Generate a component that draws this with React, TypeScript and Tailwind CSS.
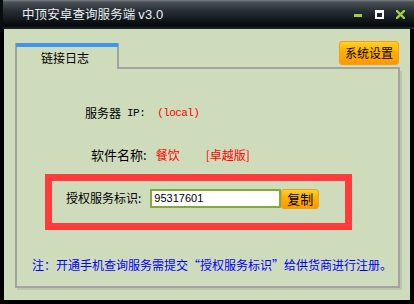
import React from "react";

const cjk = "font-['Noto_Sans_CJK_SC','Noto_Sans_CJK_JP',sans-serif]";

export default function App() {
  return (
    <div className={`w-[414px] h-[304px] bg-black flex flex-col ${cjk}`}>
      {/* title bar */}
      <div className="h-[29px] shrink-0 flex items-center bg-[linear-gradient(to_bottom,#7d8388_0px,#4a5157_2px,#2a3137_10px,#0d1216_22px,#05080a_26px,#1c2227_28px)] border-l-[3px] border-[#0a0d10]">
        <span className="ml-[19px] text-[12.5px] leading-[16px] text-[#e8eef2] tracking-[0.1px]">
          中顶安卓查询服务端 <span className="font-['Liberation_Sans',sans-serif] text-[13px]">v3.0</span>
        </span>
        <div className="ml-auto flex items-center mr-[9px]">
          <div className="w-[8px] h-[3px] bg-[#a3d13d] mt-[1px]" />
          <div className="w-[9px] h-[9px] ml-[13px] border-2 border-t-[3px] border-white" />
          <svg className="ml-[12px]" width="9" height="9" viewBox="0 0 9 9">
            <path d="M1 1 L8 8 M8 1 L1 8" stroke="#a3d13d" strokeWidth="2.4" strokeLinecap="square" />
          </svg>
        </div>
      </div>

      {/* body */}
      <div className="flex-1 ml-[4px] mr-[4px] mb-[4px] bg-[#cfdcbb] flex flex-col pl-[11px] pr-[10px] pt-[12px]">
        {/* tab row */}
        <div className="flex h-[28px]">
          <div className="w-[104px] mt-[2px] border-l-2 border-r-2 border-[#a3a3a3] flex flex-col">
            <div className="h-[4px] bg-[#3d97f0] rounded-t-[1px] -mx-[1px]" />
            <div className="text-center text-[12px] leading-[16px] text-black mt-[3px] -ml-[4px]">链接日志</div>
          </div>
          <div className="flex-1 border-b-2 border-[#a3a3a3] flex justify-end items-start">
            <div className="w-[60px] h-[24px] mr-[1px] rounded-[3px] border border-[#f0a010] bg-[linear-gradient(to_bottom,#ffcf2a,#ffb000_45%,#ff9800)] flex items-center justify-center text-[12px] leading-[16px] text-black">
              系统设置
            </div>
          </div>
        </div>

        {/* panel */}
        <div className="h-[219px] border-l-2 border-r-2 border-b-2 border-[#a3a3a3] shadow-[2px_2px_0_#bcc6ad] flex flex-col">
          <div className="mt-[36px] ml-[68px] h-[16px] flex items-center text-[12px] leading-[16px] text-black">
            <span>服务器</span>
            <span className="font-['Liberation_Mono',monospace] text-[11px] tracking-[-0.5px] ml-[6px]">IP:</span>
            <span className="font-['Liberation_Mono',monospace] text-[11px] tracking-[-0.6px] ml-[12px] text-[#ff0000]">(local)</span>
          </div>
          <div className="mt-[26px] ml-[74px] h-[16px] flex items-center text-[13px] leading-[16px] text-black">
            <span>软件名称:</span>
            <span className="ml-[9px] text-[#ff0000] text-[12px]">餐饮</span>
            <span className="ml-[26px] text-[#ff0000] text-[12px]">[卓越版]</span>
          </div>
          <div className="mt-[11px] ml-[28px] w-[307px] h-[56px] border-[7px] border-[#ff3b3b] flex items-start pt-[7px]">
            <span className="ml-[14px] h-[20px] flex items-center text-[12px] leading-[16px] text-black">授权服务标识:</span>
            <div className="ml-[9px] mt-[1px] w-[131px] h-[19px] bg-white border-2 border-[#84a83a] flex items-center pl-[2px] font-['Liberation_Sans',sans-serif] text-[11px] text-black">
              95317601
            </div>
            <div className="w-[38px] h-[20px] mt-[1px] rounded-[3px] border border-[#f0a010] bg-[linear-gradient(to_bottom,#ffcf2a,#ffb000_45%,#ff9800)] flex items-center justify-center text-[13px] leading-[16px] text-black">
              复制
            </div>
          </div>
          <div className="mt-[27px] ml-[15px] h-[16px] text-[12px] leading-[16px] text-[#0000ff] whitespace-nowrap">
            注：开通手机查询服务需提交“授权服务标识”给供货商进行注册。
          </div>
        </div>
      </div>
    </div>
  );
}
